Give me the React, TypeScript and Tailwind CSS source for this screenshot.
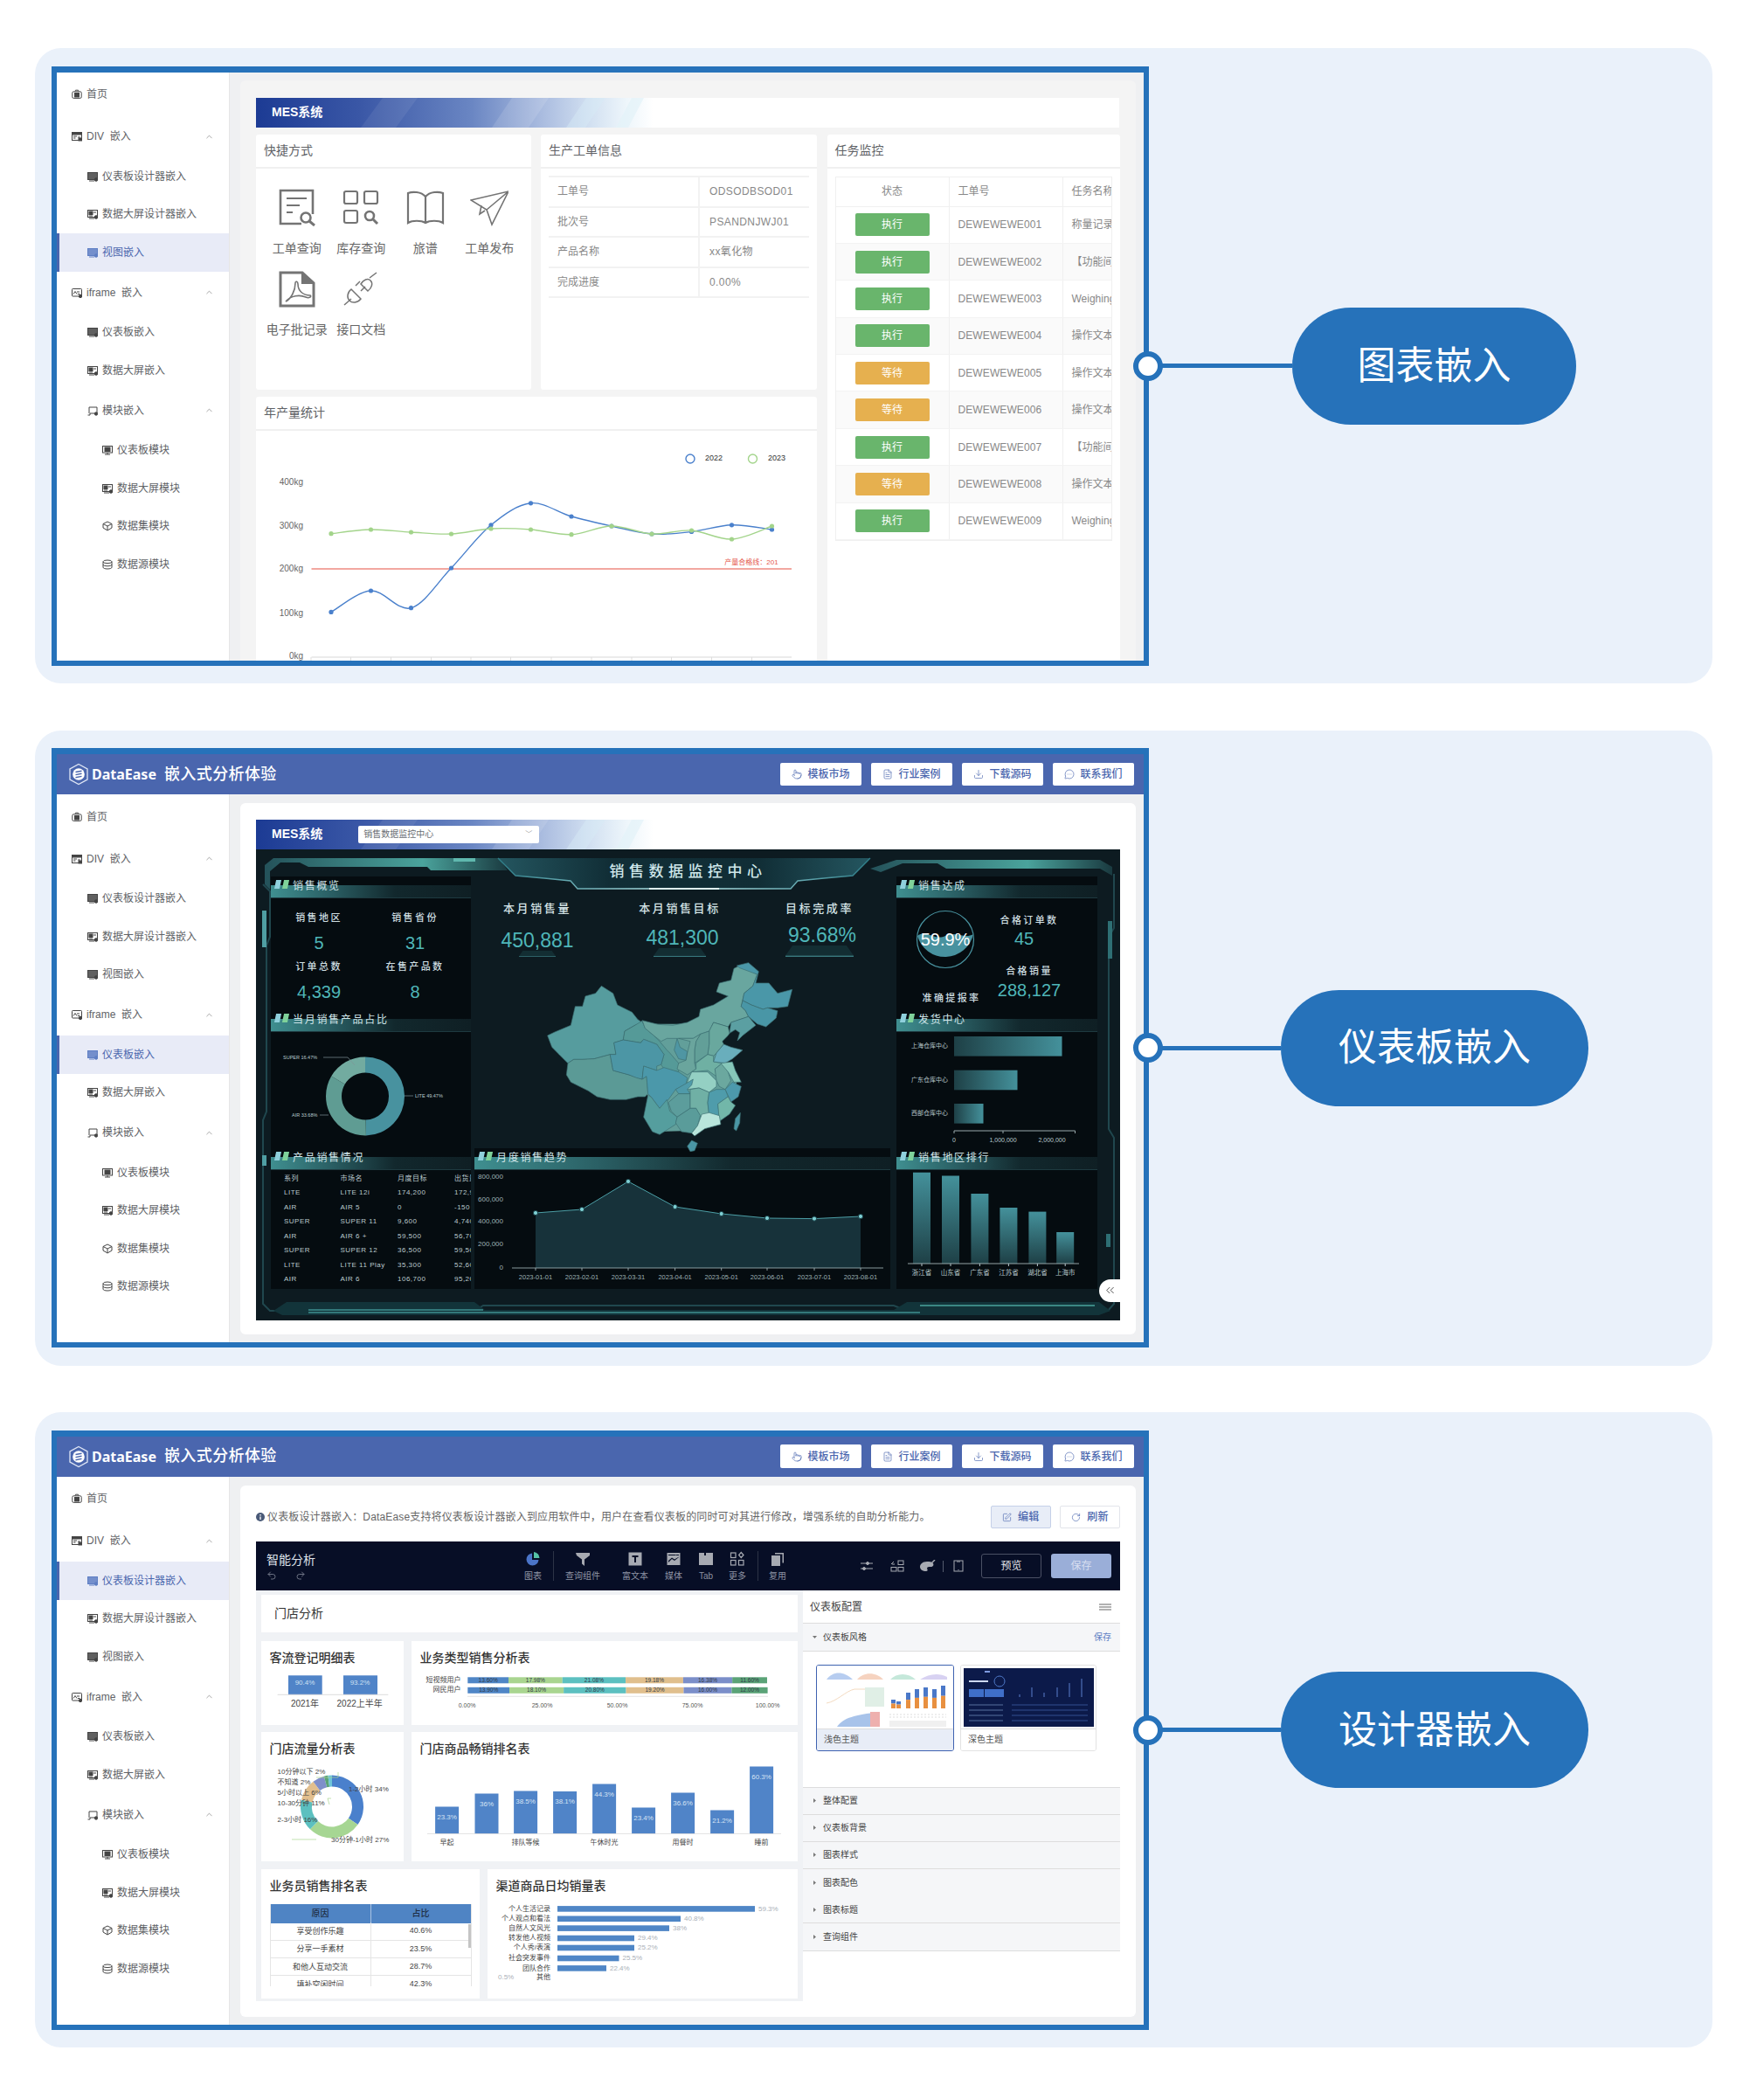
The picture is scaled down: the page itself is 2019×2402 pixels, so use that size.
import { ReactNode } from 'react';
import { ChevronUp, ChevronsLeft, Download, FileText, MessageCircleMore, Pointer, Redo2, RotateCw, SquarePen, Undo2 } from 'lucide-react';

type NavItem = { label: string; level: 0 | 1 | 2; icon: string; chevron?: boolean };

const navItems: NavItem[] = [
  { label: '首页', level: 0, icon: 'home' },
  { label: 'DIV  嵌入', level: 0, icon: 'div', chevron: true },
  { label: '仪表板设计器嵌入', level: 1, icon: 'screen' },
  { label: '数据大屏设计器嵌入', level: 1, icon: 'large' },
  { label: '视图嵌入', level: 1, icon: 'screen' },
  { label: 'iframe  嵌入', level: 0, icon: 'frame', chevron: true },
  { label: '仪表板嵌入', level: 1, icon: 'screen' },
  { label: '数据大屏嵌入', level: 1, icon: 'large' },
  { label: '模块嵌入', level: 1, icon: 'module', chevron: true },
  { label: '仪表板模块', level: 2, icon: 'monitor' },
  { label: '数据大屏模块', level: 2, icon: 'large' },
  { label: '数据集模块', level: 2, icon: 'cube' },
  { label: '数据源模块', level: 2, icon: 'db' },
];

function NavIcon({ kind }: { kind: string }) {
  return (
    <svg width="12" height="12" viewBox="0 0 12 12" className="shrink-0" fill="none" stroke="currentColor" strokeWidth="1">
      {kind === 'home' && (
        <>
          <rect x="0.8" y="2.8" width="10.4" height="7.6" rx="1.5" />
          <rect x="3.5" y="4.5" width="5" height="4.5" fill="currentColor" />
          <path d="M4 2.5 L4.5 1.2 H7.5 L8 2.5" />
        </>
      )}
      {kind === 'div' && (
        <>
          <rect x="0.5" y="1.5" width="11" height="9" fill="none" />
          <rect x="0.5" y="1.5" width="11" height="2.5" fill="currentColor" />
          <path d="M2 6 H6 M2 8 H4.5 M7 7 H10" />
          <rect x="8" y="8" width="3.5" height="3" fill="currentColor" />
        </>
      )}
      {kind === 'screen' && (
        <>
          <rect x="0.5" y="1.5" width="11" height="8" fill="currentColor" fillOpacity="0.85" />
          <circle cx="10" cy="9.5" r="1.8" fill="currentColor" />
          <path d="M2 11 H8" />
        </>
      )}
      {kind === 'large' && (
        <>
          <rect x="0.5" y="1.5" width="11" height="8" />
          <rect x="2" y="3" width="4" height="3.5" fill="currentColor" />
          <path d="M2 8 H6 M7 4 H10" />
          <circle cx="10" cy="9.5" r="1.8" fill="currentColor" />
          <path d="M2 11 H8" />
        </>
      )}
      {kind === 'frame' && (
        <>
          <rect x="0.5" y="1.5" width="11" height="8.5" rx="0.8" />
          <path d="M2 7.5 L4 4.5 L6 7.5 M6 5 L9 5 M7 7.5 H9.5" />
          <circle cx="10" cy="10" r="1.7" fill="currentColor" />
        </>
      )}
      {kind === 'module' && (
        <>
          <path d="M2 9 V2 H11 V9 H5" />
          <path d="M0.5 11 H3 V9 H5" />
          <circle cx="10" cy="9.5" r="1.7" fill="currentColor" />
        </>
      )}
      {kind === 'monitor' && (
        <>
          <rect x="0.5" y="1.5" width="11" height="7.5" />
          <rect x="3" y="3" width="6" height="4.5" fill="currentColor" />
          <path d="M3 11 H9 M6 9 V11" />
        </>
      )}
      {kind === 'cube' && <path d="M6 1 L11 3.5 V8 L6 11 L1 8 V3.5 Z M1 3.5 L6 6 L11 3.5 M6 6 V11" />}
      {kind === 'db' && (
        <>
          <ellipse cx="6" cy="2.8" rx="5" ry="1.8" />
          <path d="M1 2.8 V9.2 C1 10.2 3 11 6 11 C9 11 11 10.2 11 9.2 V2.8 M1 6 C1 7 3 7.8 6 7.8 C9 7.8 11 7 11 6" />
        </>
      )}
    </svg>
  );
}

function Sidebar({ active }: { active: string }) {
  return (
    <div className="w-[198px] shrink-0 bg-white border-r border-[#e6e6e6] pt-[1.5px] text-[12px] text-[#606266]">
      {navItems.map((item) => {
        const isActive = item.label === active;
        const isHead = item.level === 0 || !!item.chevron;
        return (
          <div
            key={item.label}
            className={`flex items-center gap-[5px] ${isHead ? 'h-[48px]' : 'h-[43.5px]'} ${
              item.level === 0 ? 'pl-[17px]' : item.level === 1 ? 'pl-[35px]' : 'pl-[52px]'
            } ${isActive ? 'bg-[#e8ebf7] text-[#4a66ae] border-l-[3px] border-[#4a66ae] !pl-[32px]' : ''}`}
          >
            <span className={isActive ? 'text-[#5f7fc4]' : 'text-[#444]'}>
              <NavIcon kind={item.icon} />
            </span>
            <span className="whitespace-pre">{item.label}</span>
            {item.chevron && <ChevronUp size={11} strokeWidth={1.4} className="ml-auto mr-[17px] text-[#777]" />}
          </div>
        );
      })}
    </div>
  );
}

function TopBar() {
  const buttons = [
    { label: '模板市场', icon: <Pointer size={12} strokeWidth={1.3} /> },
    { label: '行业案例', icon: <FileText size={12} strokeWidth={1.3} /> },
    { label: '下载源码', icon: <Download size={12} strokeWidth={1.3} /> },
    { label: '联系我们', icon: <MessageCircleMore size={12} strokeWidth={1.3} /> },
  ];
  return (
    <div className="h-[46px] shrink-0 bg-[#4a66ae] flex items-center pl-[13px] pr-[11px]">
      <svg width="24" height="26" viewBox="0 0 24 26" fill="none" className="shrink-0">
        <path d="M12 1.5 L22 7 V19 L12 24.5 L2 19 V7 Z" stroke="#dfe6f5" strokeWidth="1.3" />
        <circle cx="12" cy="13" r="6.8" fill="#fff" />
        <path d="M8.5 10.5 L15.5 9.2 M8.5 13.6 L15.5 12.3 M8.5 16.7 L15.5 15.4" stroke="#4a66ae" strokeWidth="1.4" />
      </svg>
      <span className="ml-[3px] font-['Noto_Sans','Noto_Sans_CJK_SC',sans-serif] text-[16px] font-bold text-white">DataEase</span>
      <span className="ml-[9px] text-[18px] tracking-[0.4px] font-medium text-white">嵌入式分析体验</span>
      <div className="ml-auto flex gap-[11px]">
        {buttons.map((b) => (
          <div key={b.label} className="w-[93px] h-[26.5px] bg-white rounded-[2px] flex items-center justify-center gap-[6px] text-[12px] font-medium text-[#4a66ae]">
            {b.icon}
            {b.label}
          </div>
        ))}
      </div>
    </div>
  );
}

function Banner({ children }: { children?: ReactNode }) {
  return (
    <div className="relative h-[34px] shrink-0 flex items-center bg-[linear-gradient(90deg,#1c3b94_0%,#3a57a6_12%,#6a86c3_25%,#a9bbdf_33%,#d4e2f2_39%,#eef6fb_43%,#ffffff_46%)]">
      <svg width="989" height="34" viewBox="0 0 989 34" className="absolute inset-0">
        <path d="M120 34 L145 0 H185 L160 34 Z" fill="#fff" fillOpacity="0.07" />
        <path d="M270 34 L293 0 H335 L312 34 Z" fill="#fff" fillOpacity="0.12" />
        <path d="M355 34 L378 0 H400 L377 34 Z" fill="#d7ecf6" fillOpacity="0.45" />
        <path d="M412 34 L430 0 H444 L426 34 Z" fill="#e3f2f8" fillOpacity="0.7" />
      </svg>
      <span className="relative ml-[18px] text-[14px] font-bold text-white">MES系统</span>
      {children}
    </div>
  );
}

function Card({ title, className, children }: { title: string; className?: string; children?: ReactNode }) {
  return (
    <div className={`bg-white rounded-[3px] overflow-hidden ${className ?? ''}`}>
      <div className="h-[39px] border-b-2 border-[#f0f0f0] flex items-center pl-[9px] text-[14px] text-[#606266]">{title}</div>
      {children}
    </div>
  );
}

function QuickIcon({ kind }: { kind: string }) {
  return (
    <svg width="44" height="44" viewBox="0 0 44 44" fill="none" stroke="#747474" strokeWidth="2.2">
      {kind === 'order' && (
        <>
          <path d="M27 41 H3 V3 H40 V30" strokeWidth="2.6" />
          <path d="M10 12 H33 M10 20 H25 M10 28 H17" />
          <circle cx="32" cy="34" r="5.5" strokeWidth="2.6" />
          <path d="M36 38 L42 43" strokeWidth="3" />
        </>
      )}
      {kind === 'stock' && (
        <>
          <rect x="3" y="4" width="15" height="14" rx="2" />
          <rect x="26" y="4" width="15" height="14" rx="2" />
          <rect x="3" y="26" width="15" height="14" rx="2" />
          <circle cx="32" cy="32" r="5" strokeWidth="2.6" />
          <path d="M36 36 L41 41" strokeWidth="3" />
        </>
      )}
      {kind === 'book' && <path d="M22 10 C17 4 7 4 2 6 V40 C7 37 17 37 22 40 C27 37 37 37 42 40 V6 C37 4 27 4 22 10 Z M22 10 V40" />}
      {kind === 'plane' && <path d="M1 14 L44 4 L25 42 L19 25 L1 14 Z M19 25 L44 4 M13 20 L11 30 L17 26" strokeWidth="1.6" />}
      {kind === 'pdf' && (
        <>
          <path d="M3 3 H28 L41 15 V41 H3 Z" strokeWidth="3" />
          <path d="M28 3 V15 H41" fill="#747474" />
          <path d="M9 36 C15 33 20 24 20 15 C20 12 23 13 23 16 C23 24 29 29 37 29 C39 30 36 33 32 31 C25 28 15 29 9 36 Z" strokeWidth="1.6" />
        </>
      )}
      {kind === 'plug' && (
        <>
          <path d="M3 40 L11 33 M40 3 L32 9" strokeWidth="1.5" />
          <path d="M11 22 L22 33 C18 38 12 38 9 35 C6 32 6 26 11 22 Z M22 16 L30 24 C35 20 36 15 33 12 C30 9 25 11 22 16 Z" strokeWidth="1.5" />
          <path d="M16 18 L21 13 M22 24 L27 19" strokeWidth="1.5" />
        </>
      )}
    </svg>
  );
}

const smooth = (pts: number[][]) => {
  let d = `M${pts[0][0]} ${pts[0][1]}`;
  for (let i = 0; i < pts.length - 1; i++) {
    const p0 = pts[Math.max(i - 1, 0)];
    const p1 = pts[i];
    const p2 = pts[i + 1];
    const p3 = pts[Math.min(i + 2, pts.length - 1)];
    d += ` C${p1[0] + (p2[0] - p0[0]) / 6} ${p1[1] + (p2[1] - p0[1]) / 6} ${p2[0] - (p3[0] - p1[0]) / 6} ${p2[1] - (p3[1] - p1[1]) / 6} ${p2[0]} ${p2[1]}`;
  }
  return d;
};

function YearChart() {
  const xs = [86, 131.5, 177.5, 223.5, 269, 314.5, 361, 407, 453, 498.5, 544.5, 590.5];
  const blue = [207.4, 183, 202.7, 157, 107.8, 82.8, 98, 109, 118, 115.5, 107.8, 113];
  const green = [117.7, 113, 116, 118, 112, 113, 118.7, 109, 118, 114, 124, 109];
  const bluePts = xs.map((x, i) => [x, blue[i]]);
  const greenPts = xs.map((x, i) => [x, green[i]]);
  return (
    <svg width="642" height="268" viewBox="0 0 642 268" className="block">
      {[['400kg', 59], ['300kg', 109], ['200kg', 158.5], ['100kg', 209], ['0kg', 258]].map(([t, y]) => (
        <text key={t} x="54" y={y} textAnchor="end" dominantBaseline="middle" fontSize="10" fill="#666">{t}</text>
      ))}
      <path d="M63.5 259 H613" stroke="#e5e5e5" strokeWidth="1.5" />
      {xs.map((x) => (
        <path key={x} d={`M${x - 23} 259 V264`} stroke="#ddd" />
      ))}
      <path d="M63.5 158 H613" stroke="#ee8a80" strokeWidth="1.5" />
      <text x="567" y="151" textAnchor="middle" dominantBaseline="middle" fontSize="8" fill="#e5584c">产量合格线：201</text>
      <path d={smooth(bluePts)} fill="none" stroke="#4a80cc" strokeWidth="1.4" />
      {bluePts.map(([x, y]) => <circle key={x} cx={x} cy={y} r="2.6" fill="#4a80cc" />)}
      <path d={smooth(greenPts)} fill="none" stroke="#a3d48b" strokeWidth="1.4" />
      {greenPts.map(([x, y]) => <circle key={x} cx={x} cy={y} r="2.6" fill="#a3d48b" />)}
      <circle cx="497" cy="32" r="5" fill="none" stroke="#4a80cc" strokeWidth="1.4" />
      <text x="524" y="32" textAnchor="middle" dominantBaseline="middle" fontSize="9" fill="#333">2022</text>
      <circle cx="568.5" cy="32" r="5" fill="none" stroke="#a3d48b" strokeWidth="1.4" />
      <text x="596" y="32" textAnchor="middle" dominantBaseline="middle" fontSize="9" fill="#333">2023</text>
    </svg>
  );
}

const quickLinks = [
  { label: '工单查询', icon: 'order' },
  { label: '库存查询', icon: 'stock' },
  { label: '旅谱', icon: 'book' },
  { label: '工单发布', icon: 'plane' },
  { label: '电子批记录', icon: 'pdf' },
  { label: '接口文档', icon: 'plug' },
];

const orderInfo = [
  ['工单号', 'ODSODBSOD01'],
  ['批次号', 'PSANDNJWJ01'],
  ['产品名称', 'xx氧化物'],
  ['完成进度', '0.00%'],
];

const tasks = [
  ['执行', 'DEWEWEWE001', '称量记录表'],
  ['执行', 'DEWEWEWE002', '【功能间清场'],
  ['执行', 'DEWEWEWE003', 'Weighing'],
  ['执行', 'DEWEWEWE004', '操作文本'],
  ['等待', 'DEWEWEWE005', '操作文本'],
  ['等待', 'DEWEWEWE006', '操作文本'],
  ['执行', 'DEWEWEWE007', '【功能间清场'],
  ['等待', 'DEWEWEWE008', '操作文本'],
  ['执行', 'DEWEWEWE009', 'Weighing'],
];

function ChartEmbed() {
  return (
    <div className="flex h-full">
      <Sidebar active="视图嵌入" />
      <div className="flex-1 bg-[#eff0f2] pl-[12px] pr-[9px] pt-[9px] min-w-0">
        <div className="h-[680px] rounded-t-[6px] bg-[#f4f4f4] pl-[18px] pr-[19px] pt-[20px]">
          <Banner />
          <div className="mt-[8px] grid grid-cols-[314.5px_316px_335px] grid-rows-[292px_1fr] gap-x-[11.5px] gap-y-[8.5px]">
            <Card title="快捷方式">
              <div className="grid grid-cols-[73.5px_73.5px_73.5px_73.5px] pl-[10px] pt-[22.5px] gap-y-[15px]">
                {quickLinks.map((q) => (
                  <div key={q.label} className="flex flex-col items-center">
                    <QuickIcon kind={q.icon} />
                    <span className="mt-[14.5px] text-[14px] leading-[20px] text-[#666] whitespace-nowrap">{q.label}</span>
                  </div>
                ))}
              </div>
            </Card>
            <Card title="生产工单信息">
              <div className="mx-[9px] mt-[8.5px] border-t-2 border-[#f2f2f2] text-[12px] text-[#888]">
                {orderInfo.map(([k, v]) => (
                  <div key={k} className="flex h-[34.6px] items-center border-b-2 border-[#f2f2f2]">
                    <span className="w-[173px] pl-[10px] border-r-2 border-[#f2f2f2] h-full flex items-center">{k}</span>
                    <span className="pl-[11px] tracking-[0.4px]">{v}</span>
                  </div>
                ))}
              </div>
            </Card>
            <Card title="任务监控" className="row-span-2">
              <div className="mx-[9px] mt-[9px] border border-[#f0f0f0] text-[12px] text-[#888] overflow-hidden">
                <div className="flex h-[34px] items-center border-b border-[#f0f0f0]">
                  <span className="w-[130px] shrink-0 h-full flex items-center justify-center border-r border-[#f0f0f0]">状态</span>
                  <span className="w-[130px] shrink-0 h-full flex items-center pl-[10px] border-r border-[#f0f0f0]">工单号</span>
                  <span className="pl-[10px] whitespace-nowrap">任务名称</span>
                </div>
                {tasks.map(([state, code, name], i) => (
                  <div key={code} className={`flex h-[42.4px] items-center border-b border-[#f3f3f3] ${i % 2 === 1 ? 'bg-[#fafafa]' : ''}`}>
                    <span className="w-[130px] shrink-0 h-full flex items-center justify-center border-r border-[#f0f0f0]">
                      <span className={`w-[85px] h-[26px] rounded-[2px] flex items-center justify-center text-white ${state === '执行' ? 'bg-[#69b56c]' : 'bg-[#e6b04f]'}`}>{state}</span>
                    </span>
                    <span className="w-[130px] shrink-0 h-full flex items-center pl-[10px] border-r border-[#f0f0f0] tracking-[0.1px]">{code}</span>
                    <span className="pl-[10px] whitespace-nowrap">{name}</span>
                  </div>
                ))}
              </div>
            </Card>
            <Card title="年产量统计" className="col-span-2 h-[330px]">
              <YearChart />
            </Card>
          </div>
        </div>
      </div>
    </div>
  );
}

function PanelTitle({ title }: { title: string }) {
  return (
    <div className="relative h-[25px] shrink-0 pl-[25px] text-[12px] leading-[22px] tracking-[1.7px] text-[#cfe4e8]">
      <div className="absolute left-0 right-0 bottom-0 h-[15px] bg-[linear-gradient(90deg,#3f8f90_0%,#2a5f64_30%,#12282d_62%,#0f1f24_100%)] border-b border-[#1e3a40]" />
      <div className="absolute left-[5px] top-[4px] w-[6px] h-[10px] -skew-x-12 bg-[#8fd0dc]" />
      <div className="absolute left-[14px] top-[4px] w-[6px] h-[10px] -skew-x-12 bg-[#7fd29a]" />
      <span className="relative">{title}</span>
    </div>
  );
}

function Panel({ title, className, children }: { title: string; className?: string; children?: ReactNode }) {
  return (
    <div className={`relative bg-[#050c10] overflow-hidden flex flex-col ${className ?? ''}`}>
      <PanelTitle title={title} />
      {children}
    </div>
  );
}

function Stat({ label, value, valueClass }: { label: string; value: string; valueClass?: string }) {
  return (
    <div className="flex flex-col items-center">
      <span className="text-[11px] leading-[14px] font-medium tracking-[2.4px] text-[#cfdfe2]">{label}</span>
      <span className={`mt-[10px] leading-[24px] text-[20px] text-[#4fb6b8] ${valueClass ?? ''}`}>{value}</span>
    </div>
  );
}

function Kpi({ label, value, className, valueClass }: { label: string; value: string; className: string; valueClass: string }) {
  return (
    <div className={`flex flex-col items-center ${className}`}>
      <span className="mt-[29px] text-[13px] leading-[16px] font-medium tracking-[2.6px] text-[#d4e3e6]">{label}</span>
      <span className={`text-[23px] leading-[28px] text-[#4fb6b8] ${valueClass}`}>{value}</span>
      <svg width="96" height="16" viewBox="0 0 96 16" className="-mt-[2px]">
        <path d="M10 0 H86 L96 14 H0 Z" fill="#17363c" fillOpacity="0.7" />
        <path d="M0 15 H96" stroke="#4fa9ad" strokeWidth="1.2" />
      </svg>
    </div>
  );
}

const provinces: [string, string][] = [
  ['#629f9a', '345,230 500,230 640,240 620,290 610,330 630,360 670,430 650,495 610,560 540,585 480,598 400,600 365,480 350,420'],
  ['#569c9e', '20,270 45,258 100,235 115,170 140,170 150,135 185,125 205,100 245,125 260,165 310,190 330,215 345,225 320,235 285,255 280,285 248,295 255,335 235,335 180,350 140,352 110,352 90,365 60,335 35,310'],
  ['#5b9a96', '90,365 110,352 140,352 180,350 235,335 245,390 300,405 345,420 360,410 365,470 355,480 330,480 290,490 235,490 190,480 160,460 100,430 85,405'],
  ['#559a98', '345,220 320,235 285,255 280,285 340,295 350,283 395,300 420,335 410,370 420,385 470,395 470,365 440,330 430,320 405,290 385,270 355,245'],
  ['#4c96a5', '248,295 280,285 340,295 350,283 395,300 420,335 410,370 395,375 395,390 350,375 345,420 325,415 300,405 245,390 235,335 255,335'],
  ['#69a69f', '345,218 400,232 450,235 500,225 540,205 545,180 590,165 640,135 600,120 610,90 650,80 660,40 680,30 740,60 725,100 695,125 685,170 700,185 710,205 650,225 640,240 590,225 575,255 545,265 520,280 470,280 430,280 410,290 385,270 355,245'],
  ['#4a97a8', '670,30 710,20 745,50 735,90 780,90 810,125 860,112 845,170 810,175 775,175 760,180 720,165 690,150 695,125 725,100 740,60 680,38'],
  ['#4996a6', '685,170 690,150 720,165 760,180 775,175 810,185 805,210 770,240 740,230 710,205 700,185'],
  ['#5b9fa2', '650,225 710,205 735,235 690,270 672,288 680,260 665,250 645,262'],
  ['#69a89e', '575,255 590,225 640,240 645,262 640,270 620,290 625,300 600,330 590,340 570,335 575,300'],
  ['#629f98', '545,265 575,255 575,300 570,335 525,365 525,320 530,290'],
  ['#6aa59d', '470,280 520,280 545,265 530,290 525,320 525,365 530,385 515,395 500,405 465,385 470,365 495,355 500,330 510,290'],
  ['#4f96a3', '465,280 475,310 500,325 495,355 470,350 455,320'],
  ['#6fb0a3', '530,365 570,335 590,340 590,360 620,365 595,385 600,410 570,390 515,395 530,385'],
  ['#69aebc', '590,360 600,330 625,300 650,310 690,320 655,350 630,365'],
  ['#94d0c3', '500,430 515,395 570,395 600,425 600,445 575,465 540,450 500,455 495,450'],
  ['#6ba89f', '595,385 620,365 640,395 650,425 630,455 610,445 600,425'],
  ['#86c7b9', '615,365 655,360 665,390 685,430 660,430 640,395'],
  ['#4c99ac', '630,455 655,430 685,445 675,480 650,498'],
  ['#4b98aa', '345,420 350,375 395,390 420,380 470,395 500,415 495,440 460,455 435,490 405,520 375,480 365,470 360,410'],
  ['#4f9aa9', '460,455 495,435 520,420 515,440 500,455 510,470 470,470'],
  ['#5c9d9c', '435,500 470,470 510,470 510,520 465,550 445,530'],
  ['#70b0a5', '510,455 540,450 575,465 570,500 575,540 545,550 530,520 510,520'],
  ['#4f9cab', '575,465 600,455 630,455 640,480 605,505 610,545 575,550 570,500'],
  ['#72b7a9', '605,505 640,480 650,498 665,510 645,540 610,565'],
  ['#559e9e', '365,475 375,480 405,520 430,490 440,530 465,550 460,575 405,610 380,600 350,550'],
  ['#5a9c9a', '465,550 510,520 530,520 545,545 535,580 515,605 480,600 460,570'],
  ['#b9e5db', '550,540 575,535 610,545 615,575 560,590 525,615 515,605 535,580'],
  ['#4a96a5', '500,650 515,630 535,640 525,665 510,668'],
  ['#4a96a5', '660,590 665,555 682,535 680,570 668,597'],
];

function ChinaMap() {
  return (
    <svg width="300" height="230" viewBox="0 0 900 690" className="block shrink-0 relative z-10 ml-[81px]">
      {provinces.map(([fill, points], i) => (
        <polygon key={i} points={points} fill={fill} stroke={i === 0 ? 'none' : '#3d6f72'} strokeWidth="2" strokeLinejoin="round" />
      ))}
    </svg>
  );
}

function DashFrame() {
  return (
    <svg width="989" height="539" viewBox="0 0 989 539" className="absolute inset-0">
      <defs>
        <linearGradient id="bandL" x1="0" x2="1" y1="0" y2="0">
          <stop offset="0" stopColor="#24525a" />
          <stop offset="0.65" stopColor="#4aa39c" />
          <stop offset="1" stopColor="#1a3a40" />
        </linearGradient>
        <linearGradient id="titleBg" x1="0" x2="1" y1="0" y2="0">
          <stop offset="0" stopColor="#2c6a75" />
          <stop offset="0.3" stopColor="#12343d" />
          <stop offset="0.7" stopColor="#12343d" />
          <stop offset="1" stopColor="#2c6a75" />
        </linearGradient>
        <linearGradient id="titleLine" x1="0" x2="1" y1="0" y2="0">
          <stop offset="0" stopColor="#2d7d88" />
          <stop offset="0.5" stopColor="#bff0f2" />
          <stop offset="1" stopColor="#2d7d88" />
        </linearGradient>
      </defs>
      <path d="M10 18 L20 10 H278 L288 24 H200 L196 20 H60 L50 15 L28 15 L16 25 V46 L10 40 Z" fill="url(#bandL)" />
      <path d="M226 10 H251 V14 H226 Z" fill="#5fb8ae" />
      <path d="M277 10 L297 30 L330 33 L360 36 L368 45 H612 L620 36 L650 33 L683 30 L703 10 Z" fill="url(#titleBg)" fillOpacity="0.75" />
      <path d="M277 10 L297 30 L330 33 L360 36 L368 45 H612 L620 36 L650 33 L683 30 L703 10" fill="none" stroke="url(#titleLine)" strokeWidth="1.4" />
      <path d="M450 45 H530" stroke="#dffafa" strokeWidth="2" />
      <path d="M703 22 L733 12 H966 L980 20 V30 L966 22 H790 L780 16 H740 L715 26 Z" fill="url(#bandL)" />
      <path d="M8 40 L16 48 V100 L12 110 V300 L8 310 V520 L16 528 H250 L260 522 H730 L745 528 H975 L982 520 V330 L976 320 V100 L982 90 V28" fill="none" stroke="#20474e" strokeWidth="2" />
      <path d="M7 70 H12 V112 H7 Z M7 350 H12 V362 H7 Z" fill="#4f9ea3" />
      <path d="M975 82 H980 V125 H975 Z M973 440 H978 V455 H973 Z" fill="#2e6f74" />
      <path d="M20 528 L35 518 H250 L262 527 H730 L745 518 H965 L978 528 L965 533 H30 Z" fill="#12343a" />
      <path d="M60 527 H260 M60 530 H760" stroke="#3f8f90" strokeWidth="1.4" />
      <path d="M760 522 H960" stroke="#4aa39c" strokeWidth="1.6" />
    </svg>
  );
}

function DonutSegments({ cx, cy, r, inner, data }: { cx: number; cy: number; r: number; inner: number; data: [number, string][] }) {
  const total = data.reduce((s, d) => s + d[0], 0);
  let a = -Math.PI / 2;
  return (
    <>
      {data.map(([v, color], i) => {
        const b = a + (v / total) * Math.PI * 2;
        const large = b - a > Math.PI ? 1 : 0;
        const d = `M${cx + r * Math.cos(a)} ${cy + r * Math.sin(a)} A${r} ${r} 0 ${large} 1 ${cx + r * Math.cos(b)} ${cy + r * Math.sin(b)} L${cx + inner * Math.cos(b)} ${cy + inner * Math.sin(b)} A${inner} ${inner} 0 ${large} 0 ${cx + inner * Math.cos(a)} ${cy + inner * Math.sin(a)} Z`;
        a = b;
        return <path key={i} d={d} fill={color} />;
      })}
    </>
  );
}

const salesRows = [
  ['系列', '市场名', '月度目标', '出货量'],
  ['LITE', 'LITE 12i', '174,200', '172,900'],
  ['AIR', 'AIR 5', '0', '-150'],
  ['SUPER', 'SUPER 11', '9,600', '4,740'],
  ['AIR', 'AIR 6 +', '59,500', '56,700'],
  ['SUPER', 'SUPER 12', '36,500', '59,500'],
  ['LITE', 'LITE 11 Play', '35,300', '52,600'],
  ['AIR', 'AIR 6', '106,700', '95,200'],
];

function MonthlyChart() {
  const pts = [[70, 49], [123, 45], [176, 13], [229.6, 42], [282.7, 50], [335, 55], [389, 55.6], [442, 53]];
  const dates = ['2023-01-01', '2023-02-01', '2023-03-31', '2023-04-01', '2023-05-01', '2023-06-01', '2023-07-01', '2023-08-01'];
  const area = `M70 112 L${pts.map((p) => p.join(' ')).join(' L')} L442 112 Z`;
  return (
    <svg width="476" height="136" viewBox="0 0 476 136" className="block">
      {[['800,000', 8], ['600,000', 34], ['400,000', 59], ['200,000', 85], ['0', 112]].map(([t, y]) => (
        <text key={t} x="33" y={y} textAnchor="end" dominantBaseline="middle" fontSize="8" fill="#9eb0b4">{t}</text>
      ))}
      <path d={area} fill="#17323a" />
      <path d={`M${pts.map((p) => p.join(' ')).join(' L')}`} fill="none" stroke="#4c9fa6" strokeWidth="1" />
      <path d="M43 112 H468" stroke="#a9bcc0" strokeWidth="0.8" />
      {pts.map(([x, y], i) => (
        <g key={x}>
          <circle cx={x} cy={y} r="2.6" fill="#7fd0d4" stroke="#183d44" />
          <path d={`M${x} 112 V115`} stroke="#a9bcc0" strokeWidth="0.8" />
          <text x={x} y="123" textAnchor="middle" dominantBaseline="middle" fontSize="7.5" fill="#9eb0b4">{dates[i]}</text>
        </g>
      ))}
    </svg>
  );
}

function Dashboard() {
  return (
    <div className="relative h-[539px] bg-[#0d1b21] overflow-hidden">
      <DashFrame />
      <div className="absolute top-[11px] left-0 right-0 text-center text-[17px] leading-[30px] font-medium tracking-[5.5px] text-[#cfe7ea] z-10">销售数据监控中心</div>
      <div className="relative pt-[31px] pl-[17px]">
        <div className="flex h-[311px]">
          <div className="w-[229px] flex flex-col">
            <Panel title="销售概览" className="h-[153px]">
              <div className="grid grid-cols-[110px_110px] pt-[15px] gap-y-[8px]">
                <Stat label="销售地区" value="5" />
                <Stat label="销售省份" value="31" />
                <Stat label="订单总数" value="4,339" />
                <Stat label="在售产品数" value="8" />
              </div>
            </Panel>
            <Panel title="当月销售产品占比" className="h-[158px]">
              <svg width="229" height="133" viewBox="0 0 229 133" className="block">
                <DonutSegments cx={108} cy={73.4} r={45} inner={27} data={[[49.47, '#48929f'], [33.68, '#5f9c93'], [16.47, '#72aba0']]} />
                <path d="M60 29 H88 L96 38 M153 73 H163 M56 95 H66" stroke="#7f9498" strokeWidth="0.7" fill="none" />
                <text x="14" y="31" fontSize="5.5" fill="#b8c9cc">SUPER 16.47%</text>
                <text x="165" y="75" fontSize="5.5" fill="#b8c9cc">LITE 49.47%</text>
                <text x="24" y="97" fontSize="5.5" fill="#b8c9cc">AIR 33.68%</text>
              </svg>
            </Panel>
          </div>
          <div className="w-[487px] flex flex-col">
            <div className="flex h-[92px] shrink-0">
              <Kpi label="本月销售量" value="450,881" className="w-[152px]" valueClass="mt-[14px]" />
              <Kpi label="本月销售目标" value="481,300" className="w-[174px]" valueClass="mt-[11px] ml-[6px]" />
              <Kpi label="目标完成率" value="93.68%" className="w-[146px]" valueClass="mt-[8px] ml-[6px]" />
            </div>
            <ChinaMap />
          </div>
          <div className="w-[230px] flex flex-col">
            <Panel title="销售达成" className="h-[153px]">
              <div className="flex">
                <div className="w-[112px] flex flex-col items-center">
                  <svg width="68" height="68" viewBox="0 0 68 68" className="mt-[13px]">
                    <circle cx="34" cy="34" r="32.5" fill="none" stroke="#48929f" strokeWidth="1.2" />
                    <path d="M2 30 C12 22 22 36 34 30 C46 24 56 34 66 28 A33 33 0 0 1 2 30 Z" fill="#48929f" />
                    <text x="34" y="41" textAnchor="middle" fontSize="20" fill="#fff">59.9%</text>
                  </svg>
                  <span className="mt-[26px] ml-[14px] text-[11px] leading-[14px] font-medium tracking-[2.4px] text-[#cfdfe2] whitespace-nowrap">准确提报率</span>
                </div>
                <div className="w-[80px] flex flex-col items-center">
                  <span className="mt-[18px] text-[11px] leading-[14px] font-medium tracking-[2.4px] text-[#cfdfe2] whitespace-nowrap">合格订单数</span>
                  <span className="mt-[3px] -ml-[12px] text-[20px] leading-[22px] text-[#4fb6b8]">45</span>
                  <span className="mt-[19px] text-[11px] leading-[14px] font-medium tracking-[2.4px] text-[#cfdfe2] whitespace-nowrap">合格销量</span>
                  <span className="mt-[4px] text-[20px] leading-[22px] text-[#4fb6b8] whitespace-nowrap">288,127</span>
                </div>
              </div>
            </Panel>
            <Panel title="发货中心" className="h-[158px]">
              <svg width="230" height="133" viewBox="0 0 230 133" className="block">
                <defs>
                  <linearGradient id="hbar" x1="0" x2="1" y1="0" y2="0">
                    <stop offset="0" stopColor="#1e4046" />
                    <stop offset="1" stopColor="#44919b" />
                  </linearGradient>
                </defs>
                {[['上海仓库中心', 5, 123.5], ['广东仓库中心', 43.7, 72.5], ['西部仓库中心', 82, 33.5]].map(([t, y, w]) => (
                  <g key={t as string}>
                    <text x="59" y={(y as number) + 11} textAnchor="end" dominantBaseline="middle" fontSize="7" fill="#b8c9cc">{t}</text>
                    <rect x="66" y={y} width={w} height="22.6" fill="url(#hbar)" />
                  </g>
                ))}
                <path d="M66 116 V113 H204.5 V116 M122 113 V116" stroke="#9aa9ac" fill="none" />
                {[['0', 66], ['1,000,000', 122], ['2,000,000', 178]].map(([t, x]) => (
                  <text key={t} x={x} y="124" textAnchor="middle" dominantBaseline="middle" fontSize="7" fill="#b8c9cc">{t}</text>
                ))}
              </svg>
            </Panel>
          </div>
        </div>
        <div className="flex h-[161px]">
          <Panel title="产品销售情况" className="w-[229px]">
            <div className="pl-[15px] pt-[2px] text-[8px] tracking-[0.5px] text-[#bccbcf]">
              {salesRows.map((row) => (
                <div key={row[0] + row[1]} className="flex h-[16.5px] items-center whitespace-nowrap">
                  <span className="w-[64.5px] shrink-0">{row[0]}</span>
                  <span className="w-[65.5px] shrink-0">{row[1]}</span>
                  <span className="w-[65px] shrink-0">{row[2]}</span>
                  <span className="shrink-0">{row[3]}</span>
                </div>
              ))}
            </div>
          </Panel>
          <Panel title="月度销售趋势" className="ml-[4px] w-[476px]">
            <MonthlyChart />
          </Panel>
          <Panel title="销售地区排行" className="ml-[7px] w-[230px]">
            <svg width="230" height="136" viewBox="0 0 230 136" className="block">
              <defs>
                <linearGradient id="vbar" x1="0" x2="0" y1="0" y2="1">
                  <stop offset="0" stopColor="#44919b" />
                  <stop offset="1" stopColor="#1e4046" />
                </linearGradient>
              </defs>
              {[['浙江省', 19, 2.7], ['山东省', 52, 6.5], ['广东省', 85.4, 27], ['江苏省', 118.4, 43], ['湖北省', 151.4, 47.6], ['上海市', 183.2, 71]].map(([t, x, top]) => (
                <g key={t as string}>
                  <rect x={x} y={top} width="20" height={107 - (top as number)} fill="url(#vbar)" />
                  <path d={`M${(x as number) + 10} 107 V110`} stroke="#b8c9cc" />
                  <text x={(x as number) + 10} y="118" textAnchor="middle" dominantBaseline="middle" fontSize="7.5" fill="#b8c9cc">{t}</text>
                </g>
              ))}
              <path d="M13 107 H209" stroke="#b8c9cc" strokeWidth="0.8" />
            </svg>
          </Panel>
        </div>
      </div>
      <div className="absolute right-0 top-[492.5px] z-10 w-[24px] h-[25.5px] rounded-l-full bg-white flex items-center justify-center text-[#333]">
        <ChevronsLeft size={15} strokeWidth={1.4} />
      </div>
    </div>
  );
}

function DashboardEmbed() {
  return (
    <div className="flex flex-col h-full">
      <TopBar />
      <div className="flex flex-1 min-h-0">
        <Sidebar active="仪表板嵌入" />
        <div className="flex-1 bg-[#eff0f2] pl-[12px] pr-[9px] pt-[10px] pb-[9px] min-w-0">
          <div className="h-full rounded-[6px] bg-white pl-[18px] pr-[18px] pt-[18.5px]">
            <Banner>
              <div className="relative ml-[41px] w-[207px] h-[20px] rounded-[2px] bg-white flex items-center justify-between pl-[6px] pr-[8px] text-[10px] text-[#6b6f75]">
                销售数据监控中心
                <span className="text-[8px] text-[#999]">﹀</span>
              </div>
            </Banner>
            <Dashboard />
          </div>
        </div>
      </div>
    </div>
  );
}

function ToolIcon({ kind }: { kind: string }) {
  return (
    <svg width="18" height="18" viewBox="0 0 18 18" fill="#a7aab2">
      {kind === 'chart' && (
        <>
          <path d="M8 2.5 A7 7 0 1 0 15.5 10 H8 Z" fill="#4a74c8" />
          <path d="M10 1 A7 7 0 0 1 16.5 8 H10 Z" fill="#55c2a6" />
        </>
      )}
      {kind === 'filter' && <path d="M1 2 H17 V5 L11 9.5 V17 L8 14.5 V9.5 L2 5 Z" />}
      {kind === 'text' && (
        <>
          <rect x="1.5" y="1.5" width="15" height="15" />
          <path d="M5.5 5 H12.5 V7 H10 V13 H8 V7 H5.5 Z" fill="#070e26" />
        </>
      )}
      {kind === 'media' && (
        <>
          <rect x="1.5" y="2" width="15" height="14" />
          <path d="M3 13 L7 9 L10 11 L15 7 V5 H3 Z M3 4 H15 V6.5 L10 9.5 L7 7.5 L3 11 Z" fill="#070e26" />
          <circle cx="11.5" cy="6" r="1.5" fill="#a7aab2" />
        </>
      )}
      {kind === 'tab' && <path d="M1 2 H7 V5 H9 V2 H17 V16 H1 Z" />}
      {kind === 'more' && (
        <g fill="none" stroke="#a7aab2" strokeWidth="1.2">
          <rect x="1.5" y="2" width="5.5" height="5.5" />
          <rect x="1.5" y="10.5" width="5.5" height="5.5" />
          <rect x="10.5" y="10.5" width="5.5" height="5.5" />
          <path d="M13.3 1.5 L16 4.5 L13.3 7.5 L10.6 4.5 Z" />
        </g>
      )}
      {kind === 'copy' && (
        <>
          <rect x="2" y="5" width="10" height="12" />
          <path d="M6 3.5 V2 H16 V13.5 H14.5 V3.5 Z" />
        </>
      )}
    </svg>
  );
}

const tools = [
  { label: '图表', kind: 'chart', width: 'w-[40px]' },
  { sep: true, label: 'a', kind: '', width: 'ml-[3px]' },
  { label: '查询组件', kind: 'filter', width: 'w-[66px]' },
  { label: '富文本', kind: 'text', width: 'w-[54px]' },
  { label: '媒体', kind: 'media', width: 'w-[34px]' },
  { label: 'Tab', kind: 'tab', width: 'w-[40px]' },
  { label: '更多', kind: 'more', width: 'w-[32px]' },
  { sep: true, label: 'b', kind: '', width: 'ml-[7px]' },
  { label: '复用', kind: 'copy', width: 'w-[44px]' },
];

function DesignerBar() {
  return (
    <div className="h-[56px] bg-[#070e26] flex items-center text-white shrink-0">
      <div className="w-[297px] pl-[12px]">
        <div className="text-[14px] leading-[20px] text-[#dfe3ea]">智能分析</div>
        <div className="mt-[2px] flex gap-[21px] text-[#6d7384]">
          <Undo2 size={12} />
          <Redo2 size={12} />
        </div>
      </div>
      {tools.map((t) =>
        t.sep ? (
          <div key={t.label} className={`w-px h-[34px] bg-[#2c3346] ${t.width}`} />
        ) : (
          <div key={t.label} className={`flex flex-col items-center ${t.width}`}>
            <ToolIcon kind={t.kind} />
            <span className="mt-[5px] text-[10px] leading-[12px] text-[#8d93a3]">{t.label}</span>
          </div>
        )
      )}
      <div className="ml-auto flex items-center pr-[10px] text-[#a7aab2]">
        <svg width="16" height="12" viewBox="0 0 16 12" fill="none" stroke="currentColor">
          <path d="M1 3 H15 M1 9 H15" />
          <circle cx="9" cy="3" r="1.5" fill="currentColor" />
          <circle cx="5" cy="9" r="1.5" fill="currentColor" />
        </svg>
        <svg width="16" height="14" viewBox="0 0 16 14" fill="none" stroke="currentColor" className="ml-[19px]">
          <rect x="9" y="1" width="6" height="4.5" />
          <rect x="1" y="8.5" width="6" height="4.5" />
          <rect x="9" y="8.5" width="6" height="4.5" />
          <path d="M1 5 L4 2 M5 5 H2" />
        </svg>
        <svg width="18" height="14" viewBox="0 0 18 14" fill="currentColor" className="ml-[18px]">
          <path d="M8 2 C3 2 0 5 0 8 C0 11 3 13 7 13 C9 13 9 11 8 10 C8 8 10 8 12 8 C15 8 16 6 15 4 C13 2 11 2 8 2 Z" />
          <path d="M10 7 L17 0" stroke="currentColor" strokeWidth="1.4" />
        </svg>
        <div className="w-px h-[13px] bg-[#555c6e] ml-[8px]" />
        <svg width="12" height="14" viewBox="0 0 12 14" fill="none" stroke="currentColor" className="ml-[11px]">
          <rect x="1" y="1" width="10" height="12" />
          <path d="M4 2 H8 M5.5 11.5 H6.5" />
        </svg>
        <div className="ml-[20px] w-[69px] h-[27.5px] rounded-[3px] border border-[#4a5064] flex items-center justify-center text-[12px] text-[#e3e6ec]">预览</div>
        <div className="ml-[11px] w-[69px] h-[27.5px] rounded-[3px] bg-[#9aaed8] flex items-center justify-center text-[12px] text-[#d7def0]">保存</div>
      </div>
    </div>
  );
}

function SmallCard({ title, className, children }: { title: string; className?: string; children?: ReactNode }) {
  return (
    <div className={`bg-white ${className ?? ''}`}>
      <div className="pt-[10px] pl-[9.5px] h-[28px] text-[14px] leading-[18px] font-medium text-[#333] whitespace-nowrap">{title}</div>
      {children}
    </div>
  );
}

const stackColors = ['#4f86c6', '#a9d590', '#5cc0c0', '#e0bf8d', '#7b8ec9', '#5aa377'];
const stackRows: [string, number, number[]][] = [
  ['短视频用户', 13.3, [13.6, 17.98, 21.08, 19.18, 16.38, 11.6]],
  ['网民用户', 24.8, [13.9, 18.1, 20.8, 19.2, 16.0, 12.0]],
];

function StackChart() {
  return (
    <svg width="442" height="68" viewBox="0 0 442 68" className="block">
      {stackRows.map(([name, y, vals]) => {
        let x = 64.3;
        return (
          <g key={name}>
            <text x="56.6" y={y + 3.5} textAnchor="end" dominantBaseline="middle" fontSize="8" fill="#444">{name}</text>
            {vals.map((v, i) => {
              const w = (v / 100) * 343.3;
              const node = (
                <g key={i}>
                  <rect x={x} y={y} width={w} height="7" fill={stackColors[i]} />
                  <text x={x + w / 2} y={y + 3.8} textAnchor="middle" dominantBaseline="middle" fontSize="6.5" fill="#2f3a46">{v.toFixed(2)}%</text>
                </g>
              );
              x += w;
              return node;
            })}
          </g>
        );
      })}
      <path d="M64 35.3 H408" stroke="#ddd" strokeWidth="0.8" />
      {[['0.00%', 63.6], ['25.00%', 149.6], ['50.00%', 235.6], ['75.00%', 321.6], ['100.00%', 407.6]].map(([t, x]) => (
        <text key={t} x={x} y="46" textAnchor="middle" dominantBaseline="middle" fontSize="7" fill="#555">{t}</text>
      ))}
    </svg>
  );
}

function StoreBars() {
  const bars: [number, number, string][] = [[40.6, 57.5, '23.3%'], [86, 42.5, '36%'], [130.6, 39.5, '38.5%'], [175.6, 40, '38.1%'], [220.6, 31.5, '44.3%'], [265.6, 58.5, '23.4%'], [310.6, 41.5, '36.6%'], [355.6, 61.5, '21.2%'], [400.6, 11.5, '60.3%']];
  return (
    <svg width="442" height="120" viewBox="0 0 442 120" className="block">
      {bars.map(([x, top, t]) => (
        <g key={x}>
          <rect x={x - 13.5} y={top} width="27" height={88.5 - top} fill="#5084c8" />
          <text x={x} y={top + 12} textAnchor="middle" dominantBaseline="middle" fontSize="8" fill="#d6e3f4">{t}</text>
        </g>
      ))}
      <path d="M18 88.5 H423" stroke="#ddd" strokeWidth="0.8" />
      {[['早起', 40.6], ['排队等候', 130.6], ['午休时光', 220.6], ['用餐时', 310.6], ['睡前', 400.6]].map(([t, x]) => (
        <text key={t} x={x} y="98.5" textAnchor="middle" dominantBaseline="middle" fontSize="8" fill="#444">{t}</text>
      ))}
    </svg>
  );
}

function TrafficDonut() {
  const labels: [string, number, number][] = [['10分钟以下 2%', 18.6, 17.8], ['不知道 2%', 18.6, 29.6], ['5小时以上 6%', 18.6, 42], ['10-30分钟 11%', 18.6, 53.6], ['2-3小时 16%', 18.6, 72.5], ['1-2小时 34%', 100, 37.6], ['30分钟-1小时 27%', 80, 96]];
  return (
    <svg width="163" height="120" viewBox="0 0 163 120" className="block">
      <DonutSegments
        cx={81}
        cy={57.5}
        r={36}
        inner={23}
        data={[[34, '#4a80cc'], [27, '#a6d693'], [16, '#5cc0c0'], [11, '#e2bf8e'], [6, '#7f8fca'], [2, '#5aa377'], [2, '#6ec5d8']]}
      />
      <path d="M63 24 H88 V18 M35 95 H63 M78 55 L76 48 H80" stroke="#a9d590" strokeWidth="0.7" fill="none" />
      {labels.map(([t, x, y]) => (
        <text key={t} x={x} y={y} dominantBaseline="middle" fontSize="8" fill="#444">{t}</text>
      ))}
    </svg>
  );
}

const channelBars: [string, number, string][] = [
  ['个人生活记录', 226, '59.3%'],
  ['个人观点和看法', 141, '40.8%'],
  ['自然人文风光', 128, '38%'],
  ['转发他人视频', 88, '29.4%'],
  ['个人秀/表演', 88, '25.2%'],
  ['社会突发事件', 70.5, '25.5%'],
  ['团队合作', 56, '22.4%'],
];

function ChannelBars() {
  const ys = [17.4, 28.8, 39.6, 51, 62, 74, 85.4];
  return (
    <svg width="355" height="118" viewBox="0 0 355 118" className="block">
      {channelBars.map(([t, w, v], i) => (
        <g key={t}>
          <text x="72" y={ys[i]} textAnchor="end" dominantBaseline="middle" fontSize="8" fill="#444">{t}</text>
          <rect x="80" y={ys[i] - 3.3} width={w} height="6.6" fill="#4f86c6" />
          <text x={84 + w} y={ys[i]} dominantBaseline="middle" fontSize="8" fill="#aab0b8">{v}</text>
        </g>
      ))}
      <text x="72" y="96" textAnchor="end" dominantBaseline="middle" fontSize="8" fill="#444">其他</text>
      <text x="12" y="96" dominantBaseline="middle" fontSize="8" fill="#aab0b8">0.5%</text>
    </svg>
  );
}

const staffRows = [
  ['享受创作乐趣', '40.6%'],
  ['分享一手素材', '23.5%'],
  ['和他人互动交流', '28.7%'],
  ['填补空闲时间', '42.3%'],
];

function LightThumb() {
  return (
    <svg width="149" height="69" viewBox="0 0 149 69" className="block">
      <rect width="149" height="69" fill="#fff" />
      <path d="M8 15 C15 5 28 5 38 15 Z" fill="#b7cdf0" />
      <path d="M43 15 C50 6 65 6 73 15 Z" fill="#f6d3c0" />
      <path d="M81 15 C88 7 102 7 110 15 Z" fill="#c5e8da" />
      <path d="M115 15 C125 8 137 7 146 12 V15 Z" fill="#d8d2f2" />
      <path d="M8 42 C20 40 30 28 40 26 H70" fill="none" stroke="#f0d0b0" strokeWidth="0.8" />
      <rect x="52" y="24" width="22" height="22" fill="#e0efe6" />
      {[[82, 38], [88, 40], [99, 30], [109, 26], [119, 24], [129, 26], [139, 22]].map(([x, y]) => (
        <g key={x}>
          <rect x={x} y={y} width="5" height={(48 - y) * 0.45} fill="#4a78c8" />
          <rect x={x} y={y + (48 - y) * 0.45} width="5" height={(48 - y) * 0.55} fill="#e89040" />
        </g>
      ))}
      <path d="M20 69 C28 58 40 56 68 52 V69 Z" fill="#a8c3ea" />
      <rect x="58" y="52" width="11" height="17" fill="#eeb0ae" />
      <path d="M80 55 H145 M80 58 H145" stroke="#c8c8c8" strokeWidth="0.6" strokeDasharray="2 2" />
      <rect x="80" y="62" width="65" height="7" fill="#f0f0f0" />
    </svg>
  );
}

function DarkThumb() {
  return (
    <svg width="149" height="67" viewBox="0 0 149 67" className="block">
      <rect width="149" height="67" fill="#0c1a4a" />
      <rect x="24" y="3" width="6" height="2" fill="#7f9be0" />
      <path d="M6 15 H28" stroke="#cdd8f2" strokeWidth="2" />
      <circle cx="41" cy="15" r="6" fill="none" stroke="#4f79c8" />
      <rect x="6" y="24" width="17" height="9" fill="#3f6fc8" />
      <rect x="24" y="24" width="22" height="9" fill="#3f6fc8" />
      {[[64, 30], [78, 22], [92, 28], [107, 22], [121, 17], [135, 12]].map(([x, y]) => (
        <path key={x} d={`M${x} ${y} V33`} stroke="#4f6fb8" strokeWidth="1.2" />
      ))}
      {[42, 48, 54, 60].map((y) => (
        <g key={y}>
          <path d={`M6 ${y} H45`} stroke="#56709e" strokeWidth="1" />
          <path d={`M55 ${y} H142`} stroke="#334f90" strokeWidth="1" />
        </g>
      ))}
    </svg>
  );
}

function Caret({ open }: { open?: boolean }) {
  return (
    <svg width="5" height="5" viewBox="0 0 5 5" fill="#777" className="shrink-0">
      {open ? <path d="M0 1 H5 L2.5 4 Z" /> : <path d="M1 0 L4 2.5 L1 5 Z" />}
    </svg>
  );
}

const configRows = ['整体配置', '仪表板背景', '图表样式', '图表配色', '图表标题', '查询组件'];

function ConfigPanel() {
  return (
    <div className="w-[363px] shrink-0 bg-white">
      <div className="h-[38px] flex items-center justify-between pl-[8px] pr-[10px] text-[12px] text-[#444] border-b border-[#ddd]">
        仪表板配置
        <svg width="14" height="8" viewBox="0 0 14 8" fill="none" stroke="#666" strokeWidth="1.2">
          <path d="M0 1 H14 M0 4 H14 M0 7 H14" />
        </svg>
      </div>
      <div className="h-[31.5px] flex items-center bg-[#f5f6f8] border-b border-[#ddd] pl-[11px] pr-[10px] text-[10px] text-[#444]">
        <Caret open />
        <span className="ml-[7px]">仪表板风格</span>
        <span className="ml-auto text-[10px] text-[#5f7fc4]">保存</span>
      </div>
      <div className="flex gap-[7.5px] pl-[15px] pt-[15px] h-[155px]">
        <div className="w-[157.5px] h-[99px] rounded-[3px] border border-[#3e62b0] overflow-hidden flex flex-col">
          <div className="h-[72px] pt-[1px] pl-[3px] bg-white shrink-0"><LightThumb /></div>
          <div className="flex-1 bg-[#e8edf7] border-t border-[#ddd] flex items-center pl-[8px] text-[10px] text-[#555]">浅色主题</div>
        </div>
        <div className="w-[156px] h-[99px] rounded-[3px] border border-[#e2e2e2] overflow-hidden flex flex-col">
          <div className="h-[72px] pt-[3px] pl-[3px] bg-white shrink-0"><DarkThumb /></div>
          <div className="flex-1 bg-white border-t border-[#ddd] flex items-center pl-[8px] text-[10px] text-[#555]">深色主题</div>
        </div>
      </div>
      <div className="border-t border-[#ddd]">
        {configRows.map((r) => (
          <div key={r} className={`h-[31.2px] flex items-center bg-[#f5f6f8] pl-[11px] text-[10px] text-[#444] ${r === '图表配色' ? '' : 'border-b border-[#ddd]'}`}>
            <Caret />
            <span className="ml-[7px]">{r}</span>
          </div>
        ))}
      </div>
    </div>
  );
}

function DesignerEmbed() {
  return (
    <div className="flex flex-col h-full">
      <TopBar />
      <div className="flex flex-1 min-h-0">
        <Sidebar active="仪表板设计器嵌入" />
        <div className="flex-1 bg-[#eff0f2] pl-[12px] pr-[9px] pt-[10px] pb-[9px] min-w-0">
          <div className="h-full rounded-[6px] bg-white pl-[18px] pr-[18px]">
            <div className="h-[64.5px] pt-[9px] flex items-center text-[12px] tracking-[0.15px] text-[#666]">
              <svg width="10" height="10" viewBox="0 0 10 10" className="shrink-0 mr-[3px]">
                <circle cx="5" cy="5" r="5" fill="#4a5a78" />
                <path d="M5 2 V3.4 M5 4.4 V8" stroke="#fff" strokeWidth="1.3" />
              </svg>
              仪表板设计器嵌入：DataEase支持将仪表板设计器嵌入到应用软件中，用户在查看仪表板的同时可对其进行修改，增强系统的自助分析能力。
              <div className="ml-auto w-[69.5px] h-[26px] rounded-[2px] bg-[#e8edf7] border border-[#c5d0e8] flex items-center justify-center gap-[7px] text-[12px] font-medium text-[#4a66ae]">
                <SquarePen size={11} strokeWidth={1.4} />
                编辑
              </div>
              <div className="ml-[10px] w-[69px] h-[26px] rounded-[2px] bg-white border border-[#e2e4ea] flex items-center justify-center gap-[7px] text-[12px] font-medium text-[#4a66ae]">
                <RotateCw size={11} strokeWidth={1.4} />
                刷新
              </div>
            </div>
            <DesignerBar />
            <div className="flex h-[470px]">
              <div className="flex-1 bg-[#f0f2f5] pl-[6px] pr-[6px] pt-[4.5px] min-w-0">
                <div className="h-[43px] bg-white flex items-center pl-[15px] text-[14px] text-[#333]">门店分析</div>
                <div className="mt-[10px] grid grid-cols-[163px_442px] grid-rows-[96px_148.5px] gap-x-[9px] gap-y-[8px]">
                  <SmallCard title="客流登记明细表">
                    <svg width="163" height="68" viewBox="0 0 163 68" className="block">
                      <rect x="31" y="11.3" width="38.7" height="22" fill="#5084c8" />
                      <rect x="94" y="11.3" width="39" height="22" fill="#5084c8" />
                      <text x="50" y="20" textAnchor="middle" dominantBaseline="middle" fontSize="8" fill="#cfe0f2">90.4%</text>
                      <text x="113" y="20" textAnchor="middle" dominantBaseline="middle" fontSize="8" fill="#cfe0f2">93.2%</text>
                      <path d="M18.6 33.3 H145.4" stroke="#ddd" />
                      <text x="50" y="44.5" textAnchor="middle" dominantBaseline="middle" fontSize="10" fill="#444">2021年</text>
                      <text x="112.7" y="44.5" textAnchor="middle" dominantBaseline="middle" fontSize="10" fill="#444">2022上半年</text>
                    </svg>
                  </SmallCard>
                  <SmallCard title="业务类型销售分析表">
                    <StackChart />
                  </SmallCard>
                  <SmallCard title="门店流量分析表">
                    <TrafficDonut />
                  </SmallCard>
                  <SmallCard title="门店商品畅销排名表">
                    <StoreBars />
                  </SmallCard>
                </div>
                <div className="mt-[8.5px] grid grid-cols-[250px_355px] gap-x-[9px]">
                  <SmallCard title="业务员销售排名表" className="h-[148px]">
                    <div className="relative mx-[9.5px] mt-[12px] h-[94px] overflow-hidden border-x border-[#e5e5e5] text-[9px] text-[#444]">
                      <div className="flex h-[22px] items-center bg-[#4f84c4] text-[#1f2f44] font-medium text-[10px]">
                        <span className="w-[115px] text-center border-r border-[#a9c2e2] leading-[22px]">原因</span>
                        <span className="flex-1 text-center">占比</span>
                      </div>
                      {staffRows.map(([k, v]) => (
                        <div key={k} className="flex h-[20.3px] items-center border-b border-[#e5e5e5]">
                          <span className="w-[115px] text-center border-r border-[#e5e5e5] leading-[20px]">{k}</span>
                          <span className="flex-1 text-center">{v}</span>
                        </div>
                      ))}
                      <div className="absolute right-0 top-[23px] w-[3px] h-[27px] bg-[#c4c4c4]" />
                    </div>
                  </SmallCard>
                  <SmallCard title="渠道商品日均销量表" className="h-[148px]">
                    <ChannelBars />
                  </SmallCard>
                </div>
              </div>
              <ConfigPanel />
            </div>
          </div>
        </div>
      </div>
    </div>
  );
}

function Section({ label, lineClass, pillClass, children }: { label: string; lineClass: string; pillClass: string; children: ReactNode }) {
  return (
    <section className="h-[727px] rounded-[30px] bg-[#eaf1fa] pl-[19px] flex items-center">
      <div className="w-[1256px] h-[686px] shrink-0 border-x-[6px] border-t-[7px] border-b-[6px] border-[#2672ba] bg-white overflow-hidden">{children}</div>
      <div className={`relative h-[5px] bg-[#2672ba] ${lineClass}`}>
        <div className="absolute -left-[18.5px] -top-[14.5px] w-[34px] h-[34px] rounded-full bg-white border-[6px] border-[#2672ba]" />
      </div>
      <div className={`rounded-full bg-[#2672ba] flex items-center justify-center text-[44px] text-white ${pillClass}`}>{label}</div>
    </section>
  );
}

export default function App() {
  return (
    <div className="min-h-[2402px] bg-white pt-[55px] pl-[40px] font-['Liberation_Sans','Noto_Sans_CJK_SC',sans-serif]">
      <div className="w-[1920px] flex flex-col gap-[53.5px]">
        <Section label="图表嵌入" lineClass="w-[164px]" pillClass="w-[325px] h-[134px]">
          <ChartEmbed />
        </Section>
        <Section label="仪表板嵌入" lineClass="w-[151px]" pillClass="w-[352px] h-[133px]">
          <DashboardEmbed />
        </Section>
        <Section label="设计器嵌入" lineClass="w-[151px]" pillClass="w-[352px] h-[133px]">
          <DesignerEmbed />
        </Section>
      </div>
    </div>
  );
}
